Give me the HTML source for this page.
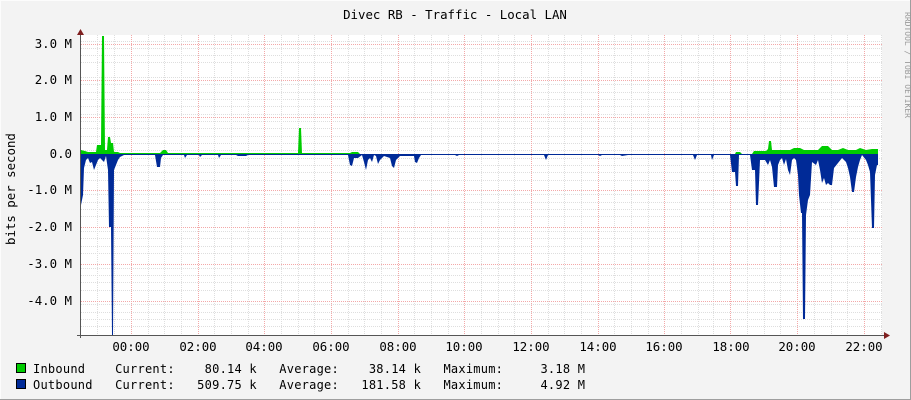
<!DOCTYPE html>
<html><head><meta charset="utf-8"><style>
html,body{margin:0;padding:0;background:#f3f3f3;}
svg{display:block;}
text{font-family:"DejaVu Sans Mono","Liberation Mono",monospace;font-size:12px;fill:#000;}
</style></head><body>
<svg width="911" height="400" viewBox="0 0 911 400" xmlns="http://www.w3.org/2000/svg">
<rect x="0" y="0" width="911" height="400" fill="#f3f3f3"/>
<line x1="0.5" y1="0" x2="0.5" y2="400" stroke="#fcfcfc"/>
<line x1="0" y1="0.5" x2="911" y2="0.5" stroke="#fcfcfc"/>
<line x1="910.5" y1="0" x2="910.5" y2="400" stroke="#9e9e9e"/>
<line x1="0" y1="399.5" x2="911" y2="399.5" stroke="#9e9e9e"/>
<text x="455" y="19" text-anchor="middle" style="font-size:12.4px">Divec RB - Traffic - Local LAN</text>
<text transform="translate(905,12) rotate(90)" style="font-size:8px;fill:#999">RRDTOOL / TOBI OETIKER</text>
<text transform="translate(15,245) rotate(-90)" style="font-size:12.4px">bits per second</text>
<rect x="81" y="35" width="801" height="300" fill="#fff"/>
<g stroke="#dedede" stroke-dasharray="1,1" stroke-width="1">
<path d="M81 41.5H882M81 48.5H882M81 55.5H882M81 62.5H882M81 77.5H882M81 84.5H882M81 92.5H882M81 99.5H882M81 106.5H882M81 114.5H882M81 121.5H882M81 128.5H882M81 136.5H882M81 143.5H882M81 150.5H882M81 158.5H882M81 165.5H882M81 172.5H882M81 180.5H882M81 194.5H882M81 202.5H882M81 209.5H882M81 216.5H882M81 231.5H882M81 238.5H882M81 246.5H882M81 253.5H882M81 268.5H882M81 275.5H882M81 282.5H882M81 290.5H882M81 304.5H882M81 312.5H882M81 319.5H882M81 326.5H882"/>
<path d="M97.5 35V335M114.5 35V335M148.5 35V335M164.5 35V335M181.5 35V335M214.5 35V335M231.5 35V335M248.5 35V335M281.5 35V335M298.5 35V335M314.5 35V335M348.5 35V335M364.5 35V335M381.5 35V335M414.5 35V335M431.5 35V335M448.5 35V335M481.5 35V335M498.5 35V335M514.5 35V335M548.5 35V335M564.5 35V335M581.5 35V335M614.5 35V335M631.5 35V335M648.5 35V335M681.5 35V335M698.5 35V335M713.5 35V335M747.5 35V335M764.5 35V335M780.5 35V335M814.5 35V335M831.5 35V335M847.5 35V335M881.5 35V335"/>
</g>
<g stroke="#f3a8a8" stroke-dasharray="1,1" stroke-width="1">
<path d="M81 44.5H882M81 80.5H882M81 117.5H882M81 190.5H882M81 227.5H882M81 264.5H882M81 301.5H882"/>
<path d="M131.5 35V335M198.5 35V335M264.5 35V335M331.5 35V335M398.5 35V335M464.5 35V335M531.5 35V335M598.5 35V335M664.5 35V335M730.5 35V335M797.5 35V335M864.5 35V335"/>
</g>
<path fill="#00cc00" d="M81 154 L81 150 L85 151 L88 152 L96 152 L97 145 L101 145 L102 36 L104 36 L105 150 L107 150 L108 137 L110 137 L111 143 L113 143 L114 152 L118 152 L120 153 L160 153 L163 150 L166 150 L168 153 L298 153 L299 128 L301 128 L302 153 L350 153 L352 152 L358 152 L360 154 L735 154 L736 152 L740 152 L742 154 L752 154 L754 151 L766 151 L768 149 L769 141 L771 141 L772 150 L790 150 L794 148 L800 148 L804 150 L818 150 L822 146 L828 146 L832 150 L838 150 L843 148 L848 150 L856 150 L860 148 L866 150 L872 149 L878 149 L878 154 Z"/>
<path fill="#002a97" d="M81 154 L81 205 L83 195 L84 168 L86 160 L88 158 L90 163 L92 162 L94 170 L96 165 L98 160 L100 158 L102 160 L104 162 L106 156 L108 170 L109 227 L111 227 L112 335 L113 335 L114 170 L116 165 L118 160 L120 157 L124 155 L155 155 L157 167 L160 167 L161 158 L163 155 L184 155 L185 158 L187 155 L199 155 L200 157 L202 155 L218 155 L219 158 L221 155 L236 155 L238 156 L246 156 L248 155 L300 155 L302 155 L348 155 L350 165 L352 166 L354 158 L358 158 L362 155 L364 162 L366 170 L368 160 L370 158 L372 162 L374 155 L376 156 L378 164 L380 160 L384 156 L390 158 L392 166 L394 168 L396 160 L400 156 L414 156 L415 162 L417 163 L419 158 L421 155 L455 155 L457 156 L459 155 L544 155 L546 160 L548 155 L598 155 L600 156 L602 155 L620 155 L622 156 L628 155 L693 155 L695 160 L697 155 L711 155 L712 160 L714 155 L730 155 L732 172 L735 172 L736 186 L738 186 L739 155 L750 155 L752 170 L755 170 L756 205 L758 205 L760 160 L765 160 L768 165 L770 160 L772 167 L774 187 L777 187 L778 165 L780 160 L782 158 L784 165 L786 159 L788 170 L790 175 L792 160 L794 158 L796 160 L798 175 L799 195 L801 213 L802 213 L803 319 L805 319 L806 215 L808 200 L810 195 L812 162 L816 165 L818 160 L820 170 L822 183 L824 178 L826 185 L828 183 L830 185 L832 185 L834 168 L838 163 L842 158 L846 162 L848 168 L850 177 L852 192 L854 192 L856 177 L858 167 L860 160 L862 155 L866 160 L868 165 L870 172 L872 228 L874 228 L875 175 L877 165 L878 165 L878 154 Z"/>
<line x1="80.5" y1="32" x2="80.5" y2="338" stroke="#555"/>
<line x1="77" y1="335.5" x2="886" y2="335.5" stroke="#555"/>
<path d="M77 35 L80.5 29 L84 35Z" fill="#7f1f1f"/>
<path d="M884 332 L890 335.5 L884 339Z" fill="#7f1f1f"/>
<g text-anchor="end" style="font-size:12.4px">
<text x="72" y="48" style="font-size:12.4px">3.0 M</text><text x="72" y="84" style="font-size:12.4px">2.0 M</text><text x="72" y="121" style="font-size:12.4px">1.0 M</text><text x="72" y="158" style="font-size:12.4px">0.0</text><text x="72" y="194" style="font-size:12.4px">-1.0 M</text><text x="72" y="231" style="font-size:12.4px">-2.0 M</text><text x="72" y="268" style="font-size:12.4px">-3.0 M</text><text x="72" y="305" style="font-size:12.4px">-4.0 M</text>
</g>
<g text-anchor="middle">
<text x="131" y="351" style="font-size:12.4px">00:00</text><text x="198" y="351" style="font-size:12.4px">02:00</text><text x="264" y="351" style="font-size:12.4px">04:00</text><text x="331" y="351" style="font-size:12.4px">06:00</text><text x="398" y="351" style="font-size:12.4px">08:00</text><text x="464" y="351" style="font-size:12.4px">10:00</text><text x="531" y="351" style="font-size:12.4px">12:00</text><text x="598" y="351" style="font-size:12.4px">14:00</text><text x="664" y="351" style="font-size:12.4px">16:00</text><text x="731" y="351" style="font-size:12.4px">18:00</text><text x="797" y="351" style="font-size:12.4px">20:00</text><text x="864" y="351" style="font-size:12.4px">22:00</text>
</g>
<rect x="16.5" y="363.5" width="9" height="9" fill="#00cc00" stroke="#000"/>
<rect x="16.5" y="379.5" width="9" height="9" fill="#002a97" stroke="#000"/>
<text x="33" y="373" xml:space="preserve" textLength="552" lengthAdjust="spacing">Inbound    Current:    80.14 k   Average:    38.14 k   Maximum:     3.18 M</text>
<text x="33" y="389" xml:space="preserve" textLength="552" lengthAdjust="spacing">Outbound   Current:   509.75 k   Average:   181.58 k   Maximum:     4.92 M</text>
</svg>
</body></html>
